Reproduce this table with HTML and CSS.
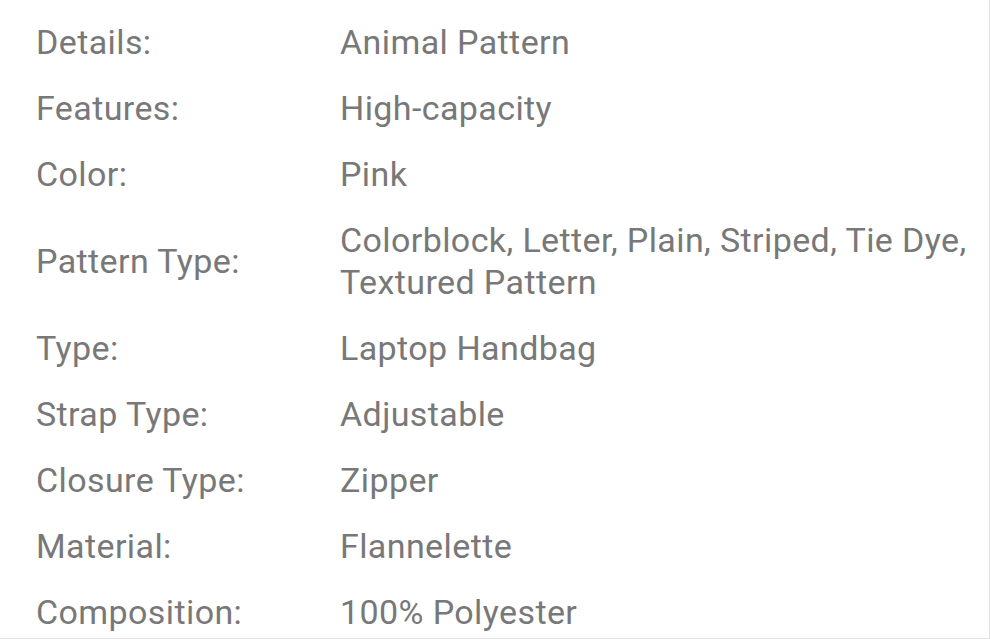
FILE: index.html
```html
<!DOCTYPE html>
<html lang="en">
<head>
<meta charset="utf-8">
<title>Product details</title>
<link rel="stylesheet" href="styles.css">
</head>
<body>
<div class="panel">
  <div class="specs">
    <div class="row"><div class="label">Details:</div><div class="value">Animal Pattern</div></div>
    <div class="row"><div class="label">Features:</div><div class="value">High-capacity</div></div>
    <div class="row"><div class="label">Color:</div><div class="value">Pink</div></div>
    <div class="row"><div class="label">Pattern Type:</div><div class="value">Colorblock, Letter, Plain, Striped, Tie Dye, Textured Pattern</div></div>
    <div class="row"><div class="label">Type:</div><div class="value">Laptop Handbag</div></div>
    <div class="row"><div class="label">Strap Type:</div><div class="value">Adjustable</div></div>
    <div class="row"><div class="label">Closure Type:</div><div class="value">Zipper</div></div>
    <div class="row"><div class="label">Material:</div><div class="value">Flannelette</div></div>
    <div class="row"><div class="label">Composition:</div><div class="value">100% Polyester</div></div>
  </div>
</div>
</body>
</html>
```

FILE: styles.css
```css
html, body {
  margin: 0;
  padding: 0;
  background: #ffffff;
}

.panel {
  box-sizing: border-box;
  width: 990px;
  height: 639px;
  overflow: hidden;
  border-right: 1px solid #e3e3e3;
  border-bottom: 1px solid #e3e3e3;
  padding: 9px 12px 0 36px;
  font-family: Roboto, "Noto Sans", sans-serif;
  font-size: 34px;
  line-height: 42px;
  letter-spacing: 0.4px;
  color: #787878;
}

.specs {
  display: flex;
  flex-direction: column;
}

.row {
  display: grid;
  grid-template-columns: 304px 1fr;
  align-items: center;
  padding: 12px 0;
}

.label,
.value {
  white-space: normal;
}
```
